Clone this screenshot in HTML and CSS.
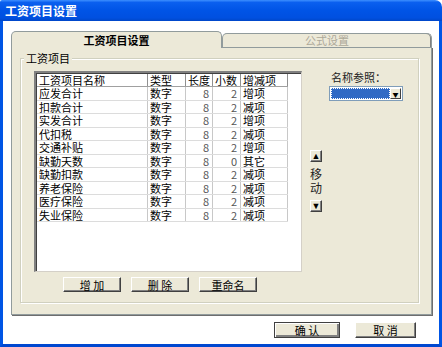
FILE: index.html
```html
<!DOCTYPE html>
<html lang="zh-CN"><head>
    <meta charset="UTF-8">
    <title>工资项目设置</title>
    <link rel="stylesheet" href="styles.css">
</head>
<body>
    <div class="window">
        <div class="titlebar">工资项目设置</div>
        <div class="client">
            <div class="tabs">
                <div class="tab active">工资项目设置</div>
                <div class="tab disabled">公式设置</div>
            </div>
            <div class="panel">
                <div class="group">
                    <span class="group-title">工资项目</span>
                    <div class="list-col">
                        <div class="list">
                            <table>
                                <tr class="head">
                                    <td class="c-name">工资项目名称</td>
                                    <td class="c-type">类型</td>
                                    <td class="c-len">长度</td>
                                    <td class="c-dec">小数</td>
                                    <td class="c-inc">增减项</td>
                                </tr>
                                <tr><td>应发合计</td><td>数字</td><td class="num">8</td><td class="num">2</td><td>增项</td></tr>
                                <tr><td>扣款合计</td><td>数字</td><td class="num">8</td><td class="num">2</td><td>减项</td></tr>
                                <tr><td>实发合计</td><td>数字</td><td class="num">8</td><td class="num">2</td><td>增项</td></tr>
                                <tr><td>代扣税</td><td>数字</td><td class="num">8</td><td class="num">2</td><td>减项</td></tr>
                                <tr><td>交通补贴</td><td>数字</td><td class="num">8</td><td class="num">2</td><td>增项</td></tr>
                                <tr><td>缺勤天数</td><td>数字</td><td class="num">8</td><td class="num">0</td><td>其它</td></tr>
                                <tr><td>缺勤扣款</td><td>数字</td><td class="num">8</td><td class="num">2</td><td>减项</td></tr>
                                <tr><td>养老保险</td><td>数字</td><td class="num">8</td><td class="num">2</td><td>减项</td></tr>
                                <tr><td>医疗保险</td><td>数字</td><td class="num">8</td><td class="num">2</td><td>减项</td></tr>
                                <tr><td>失业保险</td><td>数字</td><td class="num">8</td><td class="num">2</td><td>减项</td></tr>
                            </table>
                        </div>
                        <div class="actions">
                            <button class="btn small">增 加</button>
                            <button class="btn small">删 除</button>
                            <button class="btn small">重命名</button>
                        </div>
                    </div>
                    <div class="move">
                        <button class="arrow">&#9650;</button>
                        <span class="move-label">移<br>动</span>
                        <button class="arrow">&#9660;</button>
                    </div>
                    <div class="ref">
                        <label>名称参照：</label>
                        <div class="combo">
                            <div class="combo-value"></div>
                            <div class="combo-btn">&#9660;</div>
                        </div>
                    </div>
                </div>
            </div>
            <div class="footer">
                <button class="btn wide">确 认</button>
                <button class="btn">取 消</button>
            </div>
        </div>
    </div>
</body></html>
```

FILE: styles.css
```css
body {
    margin: 0;
    font-family: "Noto Sans CJK SC", "Liberation Sans", sans-serif;
    font-size: 11px;
    line-height: 13px;
    color: #000;
    background: #fff;
}
.window {
    width: 442px;
    height: 347px;
    display: flex;
    flex-direction: column;
}
.titlebar {
    height: 21px;
    line-height: 22px;
    padding-left: 5px;
    color: #fff;
    font-weight: bold;
    font-size: 12px;
    background: linear-gradient(to bottom, #3d8fff 0%, #0a5fef 12%, #0054e6 50%, #0050e0 85%, #0046c8 100%);
    border-top-right-radius: 7px;
    border-top-left-radius: 2px;
}
.client {
    flex: 1;
    background: #fff;
    border-left: 3px solid #0055e5;
    border-right: 3px solid #0055e5;
    border-bottom: 3px solid #0048d0;
    padding: 10px 7px 0 8px;
    display: flex;
    flex-direction: column;
}
.tabs {
    display: flex;
    height: 16px;
    align-items: flex-end;
}
.tab {
    box-sizing: border-box;
    text-align: center;
    background: #ece9d8;
    border: 1px solid #919b9c;
    border-bottom: none;
    border-radius: 5px 5px 0 0;
    font-size: 11px;
}
.tab.active {
    width: 211px;
    height: 17px;
    margin-bottom: -1px;
    line-height: 16px;
    font-weight: bold;
    position: relative;
    z-index: 1;
}
.tab.disabled {
    width: 210px;
    height: 14px;
    line-height: 13px;
    color: #aca899;
    box-shadow: inset -1px 0 0 #808080;
}
.panel {
    box-sizing: border-box;
    height: 268px;
    background: #ece9d8;
    border: 1px solid #919b9c;
    box-shadow: 1px 1px 0 #6e6e6e;
    padding: 10px 12px 11px 8px;
}
.group {
    position: relative;
    box-sizing: border-box;
    height: 100%;
    border: 1px solid #d0d0bf;
    box-shadow: inset 1px 1px 0 #fff, 1px 1px 0 #fff;
    padding: 12px 0 0 13px;
    display: flex;
}
.group-title {
    position: absolute;
    left: 3px;
    top: -7px;
    padding: 0 2px;
    background: #ece9d8;
    line-height: 12px;
}
.list-col {
    width: 268px;
}
.list {
    box-sizing: border-box;
    height: 201px;
    background: #fff;
    border-top: 2px solid #808080;
    border-left: 2px solid #808080;
    border-right: 1px solid #d4d0c8;
    border-bottom: 1px solid #d4d0c8;
    box-shadow: inset 1px 1px 0 #404040;
    padding: 1px 0 0 1px;
}
table {
    border-collapse: collapse;
    table-layout: fixed;
    width: 247px;
    font-size: 11px;
    border-right: 1px solid #404040;
    border-bottom: 1px solid #404040;
}
td {
    height: 12.5px;
    padding: 0 2px;
    line-height: 12px;
    white-space: nowrap;
    overflow: hidden;
    border-right: 1px solid #c8c8c8;
    border-bottom: 1px solid #dcdcdc;
}
tr.head td {
    height: 12px;
    border-right: 1px solid #909090;
    border-bottom: 1px solid #a0a0a0;
}
.c-name { width: 106px; }
.c-type { width: 33px; }
.c-len { width: 22px; }
.c-dec { width: 23px; }
.c-inc { width: 42px; }
td.num {
    text-align: right;
    padding-right: 3px;
    color: #555;
}
.actions {
    display: flex;
    gap: 10px;
    margin-top: 5px;
    padding-left: 29px;
}
.btn {
    box-sizing: border-box;
    width: 58px;
    height: 15px;
    padding: 0;
    font-family: "Noto Sans CJK SC", sans-serif;
    font-size: 11px;
    line-height: 12px;
    color: #000;
    background: #ece9d8;
    border: 1px solid;
    border-color: #fff #404040 #404040 #fff;
    box-shadow: inset -1px -1px 0 #808080;
}
.move {
    display: flex;
    flex-direction: column;
    align-items: center;
    width: 12px;
    margin-left: 8px;
    padding-top: 79px;
}
.arrow {
    box-sizing: border-box;
    width: 12px;
    height: 12px;
    padding: 0;
    font-size: 9px;
    line-height: 9px;
    color: #000;
    background: #ece9d8;
    border: 1px solid;
    border-color: #fff #404040 #404040 #fff;
    box-shadow: inset -1px -1px 0 #808080;
}
.move-label {
    font-size: 12px;
    line-height: 14px;
    margin: 5px 0 5px;
    color: #222;
}
.ref {
    margin-left: 7px;
}
.ref label {
    display: block;
    line-height: 12px;
    margin-left: 2px;
    color: #222;
}
.combo {
    display: flex;
    box-sizing: border-box;
    width: 74px;
    height: 15px;
    margin-top: 3px;
    background: #fff;
    border: 1px solid #7f9db9;
    padding: 1px;
}
.combo-value {
    flex: 1;
    background: #316ac5;
    outline: 1px dotted #fff;
    outline-offset: -1px;
}
.combo-btn {
    box-sizing: border-box;
    width: 11px;
    font-size: 6px;
    line-height: 11px;
    text-align: center;
    background: #ece9d8;
    border: 1px solid;
    border-color: #fff #404040 #404040 #fff;
}
.footer {
    display: flex;
    justify-content: flex-end;
    gap: 15px;
    margin-top: 7px;
    padding-right: 16px;
}
.footer .btn {
    width: 61px;
    height: 16px;
}
.footer .btn.wide {
    width: 66px;
    border-color: #404040;
    box-shadow: inset 1px 1px 0 #fff, inset -2px -2px 0 #808080;
}
```
